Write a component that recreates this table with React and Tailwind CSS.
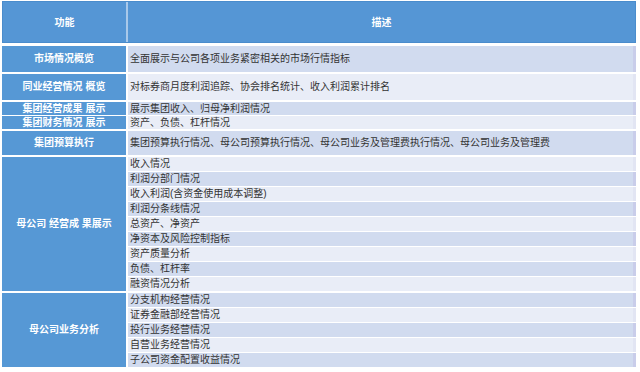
import React from 'react';

// 功能 / 描述 overview table
const groups = [
    { label: '市场情况概览', items: ['全面展示与公司各项业务紧密相关的市场行情指标'], h: 'h-[26px]', mt: 'mt-[3px]' },
    { label: '同业经营情况 概览', items: ['对标券商月度利润追踪、协会排名统计、收入利润累计排名'], h: 'h-[26px]', mt: 'mt-[2px]' },
    { label: '集团经营成果 展示', items: ['展示集团收入、归母净利润情况'], h: 'h-[13px]', mt: 'mt-[2px]' },
    { label: '集团财务情况 展示', items: ['资产、负债、杠杆情况'], h: 'h-[13px]', mt: 'mt-[1px]' },
    { label: '集团预算执行', items: ['集团预算执行情况、母公司预算执行情况、母公司业务及管理费执行情况、母公司业务及管理费'], h: 'h-[24px]', mt: 'mt-[2px]' },
    {
        label: '母公司 经营成 果展示',
        items: ['收入情况', '利润分部门情况', '收入利润(含资金使用成本调整)', '利润分条线情况', '总资产、净资产', '净资本及风险控制指标', '资产质量分析', '负债、杠杆率', '融资情况分析'],
        h: 'h-[14px]',
        mt: 'mt-[2px]',
    },
    {
        label: '母公司业务分析',
        items: ['分支机构经营情况', '证券金融部经营情况', '投行业务经营情况', '自营业务经营情况', '子公司资金配置收益情况'],
        h: 'h-[14px]',
        mt: 'mt-[2px]',
    },
];

export default function App() {
    let idx = 0;
    return (
        <div className="w-[640px] h-[372px] bg-white pt-px pl-[2px] font-['Liberation_Sans','Noto_Sans_CJK_SC',sans-serif] overflow-hidden">
            <div className="flex flex-col w-[634px]">
                {/* header */}
                <div className="flex h-[42px] gap-[2px] bg-[#a9c9ea] border border-[#4a8ccc]">
                    <div className="w-[123px] bg-[#5596d5] flex items-center justify-center text-white text-[10px] font-bold">功能</div>
                    <div className="flex-1 bg-[#5596d5] flex items-center justify-center text-white text-[10px] font-bold">描述</div>
                </div>

                {groups.map((g) => (
                    <div key={g.label} className={`flex gap-[2px] ${g.mt}`}>
                        <div className="w-[124px] shrink-0 bg-[#5698d5] flex items-center justify-center text-white text-[10px] font-bold leading-none whitespace-pre">
                            {g.label}
                        </div>
                        <div className="flex-1 flex flex-col gap-px">
                            {g.items.map((t) => {
                                const dark = idx++ % 2 === 0;
                                return (
                                    <div
                                        key={t}
                                        className={`${g.h} flex items-center pl-[2px] text-[10px] leading-none text-[#333] border-r-[3px] ${dark ? 'bg-[#d1dbef] border-[#c9cdea]' : 'bg-[#e9edf7] border-[#e2e5f3]'}`}
                                    >
                                        {t}
                                    </div>
                                );
                            })}
                        </div>
                    </div>
                ))}
            </div>
        </div>
    );
}
